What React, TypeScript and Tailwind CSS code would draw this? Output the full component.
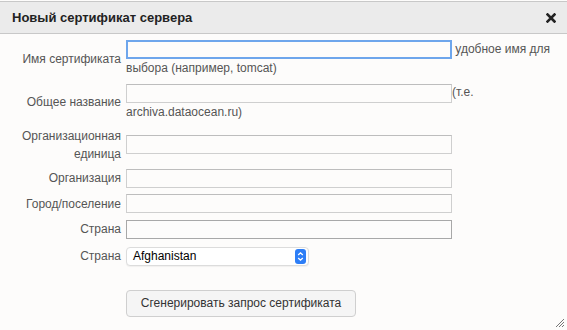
import React from "react";

const baseInput = "inline-block align-middle h-[19px] w-[326px] bg-[#fdfcfb] outline-none";
const inputCls = baseInput + " border border-[#cfcfcf] border-t-[#bdbdbd]";
const focusCls = baseInput + " border-2 border-[#6ea6ec]";
const darkCls = baseInput + " border border-[#a8a8a8]";

function Row({ label, children, className = "" }: { label: React.ReactNode; children: React.ReactNode; className?: string }) {
  return (
    <div className={"flex items-center " + className}>
      <div className="w-[116px] shrink-0 pr-[5px] text-right leading-[18px] text-[#555]">{label}</div>
      <div className="w-[430px] leading-[18px] text-[#555]">{children}</div>
    </div>
  );
}

export default function App() {
  return (
    <div
      className="relative h-[330px] w-[567px] overflow-hidden bg-[#fdfcfb] pt-[1px] text-[12px]"
      style={{ fontFamily: '"Liberation Sans", Arial, sans-serif' }}
    >
      {/* title bar */}
      <div className="flex h-[33px] items-center justify-between border-y border-[#c8c8c8] bg-[#ebebeb] pl-[12px] pr-[11px]">
        <span className="text-[13px] font-bold text-[#222]">Новый сертификат сервера</span>
        <svg width="10" height="10" viewBox="0 0 10 10">
          <path d="M1.5 1.5 L8.5 8.5 M8.5 1.5 L1.5 8.5" stroke="#222" strokeWidth="2.6" strokeLinecap="square" />
        </svg>
      </div>

      <div className="flex flex-col gap-[6px] pl-[10px] pt-[6px]">
        <Row label="Имя сертификата">
          <input className={focusCls} /> удобное имя для выбора (например, tomcat)
        </Row>
        <Row label="Общее название">
          <input className={inputCls} />(т.е. archiva.dataocean.ru)
        </Row>
        <Row label={<>Организационная<br />единица</>}>
          <input className={inputCls} />
        </Row>
        <Row label="Организация">
          <input className={inputCls} />
        </Row>
        <Row label="Город/поселение">
          <input className={inputCls} />
        </Row>
        <Row label="Страна">
          <input className={darkCls} />
        </Row>
        <Row label="Страна" className="mt-[2px]">
          <div className="flex h-[19px] w-[183px] items-center justify-between rounded-[4px] border border-[#dcdcdc] bg-white pl-[6px] pr-[2px] text-[12px] text-black shadow-[0_1px_1px_rgba(0,0,0,0.05)]">
            <span>Afghanistan</span>
            <span className="flex h-[15px] w-[11px] items-center justify-center rounded-[3px] bg-[#2d7ef7]">
              <svg width="7" height="11" viewBox="0 0 7 11">
                <path d="M1.2 4 L3.5 1.8 L5.8 4 M1.2 7 L3.5 9.2 L5.8 7" fill="none" stroke="white" strokeWidth="1.3" />
              </svg>
            </span>
          </div>
        </Row>
        <div className="pl-[116px] pt-[18px]">
          <button className="h-[27px] w-[230px] rounded-[4px] border border-[#cfcfcf] bg-[#f5f5f5] text-[12px] text-[#333]">
            Сгенерировать запрос сертификата
          </button>
        </div>
      </div>

      {/* resize grip */}
      <svg className="absolute bottom-[2px] right-[2px]" width="11" height="11" viewBox="0 0 11 11">
        <path d="M10 2 L2 10 M10 5 L5 10 M10 8 L8 10" stroke="#777" strokeWidth="1" />
      </svg>
    </div>
  );
}
